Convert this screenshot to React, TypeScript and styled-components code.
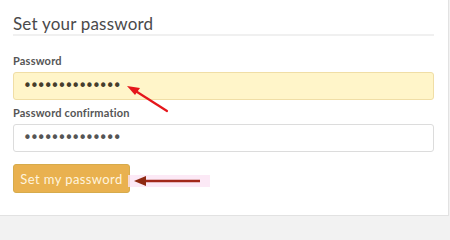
import React from "react";
import styled, { createGlobalStyle } from "styled-components";

const Global = createGlobalStyle`
  html, body { margin: 0; padding: 0; background: #f2f2f2; }
  body { font-family: "Lato", "Open Sans", sans-serif; }
`;

const Page = styled.div`
  position: relative;
  width: 450px;
  height: 219px;
  overflow: hidden;
`;

const Card = styled.div`
  box-sizing: border-box;
  width: 449px;
  height: 216px;
  background: #fff;
  border-right: 1px solid #e2e2e2;
  border-bottom: 1px solid #e2e2e2;
  padding: 14px 14px 0 13px;
  display: flex;
  flex-direction: column;
`;

const Heading = styled.h2`
  margin: 0;
  font-family: "Lato", sans-serif;
  font-weight: 400;
  font-size: 17px;
  line-height: 20px;
  color: #4a4a4a;
  padding-bottom: 0;
  border-bottom: 2px solid #f0f0f0;
  letter-spacing: 0.2px;
`;

const Field = styled.div<{ $top: number }>`
  display: flex;
  flex-direction: column;
  gap: 4px;
  margin-top: ${(p) => p.$top}px;
`;

const Label = styled.label`
  font-family: "Lato", sans-serif;
  font-weight: 700;
  font-size: 11px;
  line-height: 14px;
  color: #555;
  letter-spacing: 0.2px;
`;

const Input = styled.div<{ $filled?: boolean }>`
  box-sizing: border-box;
  height: 28px;
  border-radius: 3px;
  border: 1px solid ${(p) => (p.$filled ? "#f0dea6" : "#dcdcdc")};
  background: ${(p) => (p.$filled ? "#fff5c9" : "#fff")};
  display: flex;
  align-items: center;
  padding-left: 9px;
  font-family: "DejaVu Sans", sans-serif;
  font-size: 15px;
  letter-spacing: -1.95px;
  color: ${(p) => (p.$filled ? "#453d2c" : "#555")};
`;

const Button = styled.button`
  margin-top: 12px;
  align-self: flex-start;
  box-sizing: border-box;
  width: 117px;
  height: 29px;
  border-radius: 3px;
  border: 1px solid #d6ab4c;
  background: #e9b14f;
  color: #fff4de;
  font-family: "Lato", sans-serif;
  font-size: 13px;
  letter-spacing: 0.4px;
  padding: 0;
`;

const Overlay = styled.svg`
  position: absolute;
  left: 0;
  top: 0;
  pointer-events: none;
`;

const Highlight = styled.div`
  position: absolute;
  left: 128px;
  top: 175px;
  width: 82px;
  height: 12px;
  background: #fbe3f4;
  opacity: 0.8;
`;

const HighlightWrap = styled.div`
  position: absolute;
  inset: 0;
  pointer-events: none;
`;

export default function App() {
  const dots = "•".repeat(14);
  return (
    <>
      <Global />
      <Page>
        <HighlightWrap>
          <Highlight />
        </HighlightWrap>
        <Card>
          <Heading>Set your password</Heading>
          <Field $top={18}>
            <Label>Password</Label>
            <Input $filled>{dots}</Input>
          </Field>
          <Field $top={6}>
            <Label>Password confirmation</Label>
            <Input>{dots}</Input>
          </Field>
          <Button>Set my password</Button>
        </Card>
        <Overlay width="450" height="219" viewBox="0 0 450 219">
          <line x1="167" y1="111" x2="134" y2="90" stroke="#e5161b" strokeWidth="2.2" strokeLinecap="round" />
          <polygon points="127,86 140,88 135,95" fill="#e5161b" />
          <line x1="200" y1="181" x2="142" y2="181" stroke="#a2281a" strokeWidth="2.6" />
          <polygon points="134,181 146,176 146,186" fill="#8f2a12" />
        </Overlay>
      </Page>
    </>
  );
}
